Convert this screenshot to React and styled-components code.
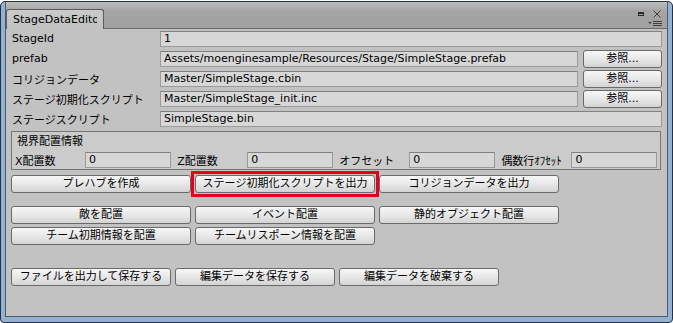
import React from "react";
import styled, { createGlobalStyle } from "styled-components";

const GlobalStyle = createGlobalStyle`
  html, body {
    margin: 0;
    padding: 0;
    background: #ffffff;
  }
  body {
    font-family: "DejaVu Sans", "Noto Sans CJK JP", sans-serif;
    font-size: 11px;
    color: #000;
  }
`;

const Frame = styled.div`
  width: 673px;
  height: 322px;
  margin-top: 1px;
  box-sizing: border-box;
  border: 1px solid #27313d;
  border-radius: 5px 5px 4px 4px;
  background: #93b1d2;
  padding: 0 4px 5px 4px;
  display: flex;
  flex-direction: column;
`;

const Panel = styled.div`
  flex: 1;
  display: flex;
  flex-direction: column;
  background: #c2c2c2;
  border: 1px solid #4f5a68;
  border-top: none;
`;

const TabBar = styled.div`
  height: 26px;
  flex: none;
  display: flex;
  align-items: flex-end;
  background: linear-gradient(#bcbcbc, #a5a5a5 35%, #a1a1a1);
  border-bottom: 1px solid #6d6d6d;
`;

const Tab = styled.div`
  width: 98px;
  height: 20px;
  margin-bottom: -1px;
  box-sizing: border-box;
  border: 1px solid #5c5c5c;
  border-bottom: none;
  border-radius: 3px 3px 0 0;
  background: linear-gradient(#cacaca, #c2c2c2);
  padding: 3px 0 0 6px;
`;

const TabLabel = styled.span`
  display: block;
  width: 84px;
  overflow: hidden;
  white-space: nowrap;
`;

const TabIcons = styled.svg`
  margin-left: auto;
  align-self: stretch;
  flex: none;
`;

const Content = styled.div`
  padding: 0 5px 0 4px;
  display: flex;
  flex-direction: column;
`;

const FieldList = styled.div`
  display: flex;
  flex-direction: column;
  gap: 0.5px;
`;

const FieldRow = styled.div`
  display: flex;
  align-items: center;
  height: 19.5px;
`;

const Label = styled.div`
  width: 148px;
  padding-left: 2px;
  flex: none;
  white-space: nowrap;
`;

const Field = styled.div`
  flex: 1;
  height: 16px;
  box-sizing: border-box;
  border: 1px solid #9a9a9a;
  border-top-color: #808080;
  background: #d7d7d7;
  padding: 0 3px;
  line-height: 14px;
  white-space: nowrap;
  overflow: hidden;
`;

const Button = styled.button`
  width: ${({ $width }) => $width}px;
  height: 18px;
  flex: none;
  box-sizing: border-box;
  margin: 0;
  padding: 0;
  border: 1px solid #6a6a6a;
  border-radius: 3px;
  background: linear-gradient(#f7f7f7, #e6e6e6 55%, #d3d3d3);
  font-family: "DejaVu Sans", "Noto Sans CJK JP", sans-serif;
  font-size: 11px;
  line-height: 15px;
  color: #000;
  text-align: center;
  white-space: nowrap;
`;

const Highlight = styled.div`
  flex: none;
  display: flex;
  margin: -4px;
  padding: 1px;
  border: 3px solid #e4001c;
`;

const BrowseButton = styled(Button)`
  margin-left: 5px;
`;

const Box = styled.div`
  margin: 2px 1px 0 1px;
  border: 1px solid #767676;
  background: #cbcbcb;
  padding: 1px 3px 1px 3px;
  display: flex;
  flex-direction: column;
`;

const BoxTitle = styled.div`
  height: 17px;
  line-height: 17px;
  padding-left: 2px;
`;

const PairRow = styled.div`
  display: flex;
  gap: 6.5px;
  margin-top: 2px;
`;

const Pair = styled.div`
  width: 156px;
  display: flex;
  align-items: center;
`;

const PairLabel = styled.div`
  width: 70px;
  flex: none;
  white-space: nowrap;
`;

const ButtonRow = styled.div`
  display: flex;
  gap: 4px;
  padding-left: 1px;
  margin-top: ${({ $top }) => $top}px;
`;

const fields = [
  { label: "StageId", value: "1" },
  { label: "prefab", value: "Assets/moenginesample/Resources/Stage/SimpleStage.prefab", browse: true },
  { label: "コリジョンデータ", value: "Master/SimpleStage.cbin", browse: true },
  { label: "ステージ初期化スクリプト", value: "Master/SimpleStage_init.inc", browse: true },
  { label: "ステージスクリプト", value: "SimpleStage.bin" },
];

const pairs = ["X配置数", "Z配置数", "オフセット", "偶数行ｵﾌｾｯﾄ"];

const App = () => (
  <>
    <GlobalStyle />
    <Frame>
      <Panel>
        <TabBar>
          <Tab>
            <TabLabel>StageDataEditor</TabLabel>
          </Tab>
          <TabIcons width="30" height="26" viewBox="0 0 30 26">
            <rect x="1" y="10" width="6" height="4" fill="#2a2a2a" />
            <rect x="2" y="12" width="4" height="1" fill="#a5a5a5" />
            <path d="M16.5 8.5 L23.5 15.5 M23.5 8.5 L16.5 15.5" stroke="#404040" strokeWidth="1" />
            <path d="M11 20 L15 20 L13 22 Z" fill="#404040" />
            <path d="M16 19.5 H25 M16 21.5 H25 M16 23.5 H25" stroke="#404040" strokeWidth="1" />
          </TabIcons>
        </TabBar>
        <Content>
          <FieldList>
            {fields.map((f) => (
              <FieldRow key={f.label}>
                <Label>{f.label}</Label>
                <Field>{f.value}</Field>
                {f.browse && <BrowseButton $width={79}>参照...</BrowseButton>}
              </FieldRow>
            ))}
          </FieldList>
          <Box>
            <BoxTitle>視界配置情報</BoxTitle>
            <PairRow>
              {pairs.map((p) => (
                <Pair key={p}>
                  <PairLabel>{p}</PairLabel>
                  <Field>0</Field>
                </Pair>
              ))}
            </PairRow>
          </Box>
          <ButtonRow $top={5}>
            <Button $width={180}>プレハブを作成</Button>
            <Highlight>
              <Button $width={180}>ステージ初期化スクリプトを出力</Button>
            </Highlight>
            <Button $width={180}>コリジョンデータを出力</Button>
          </ButtonRow>
          <ButtonRow $top={13}>
            <Button $width={180}>敵を配置</Button>
            <Button $width={180}>イベント配置</Button>
            <Button $width={180}>静的オブジェクト配置</Button>
          </ButtonRow>
          <ButtonRow $top={3}>
            <Button $width={180}>チーム初期情報を配置</Button>
            <Button $width={180}>チームリスポーン情報を配置</Button>
          </ButtonRow>
          <ButtonRow $top={23}>
            <Button $width={160}>ファイルを出力して保存する</Button>
            <Button $width={160}>編集データを保存する</Button>
            <Button $width={160}>編集データを破棄する</Button>
          </ButtonRow>
        </Content>
      </Panel>
    </Frame>
  </>
);

export default App;
